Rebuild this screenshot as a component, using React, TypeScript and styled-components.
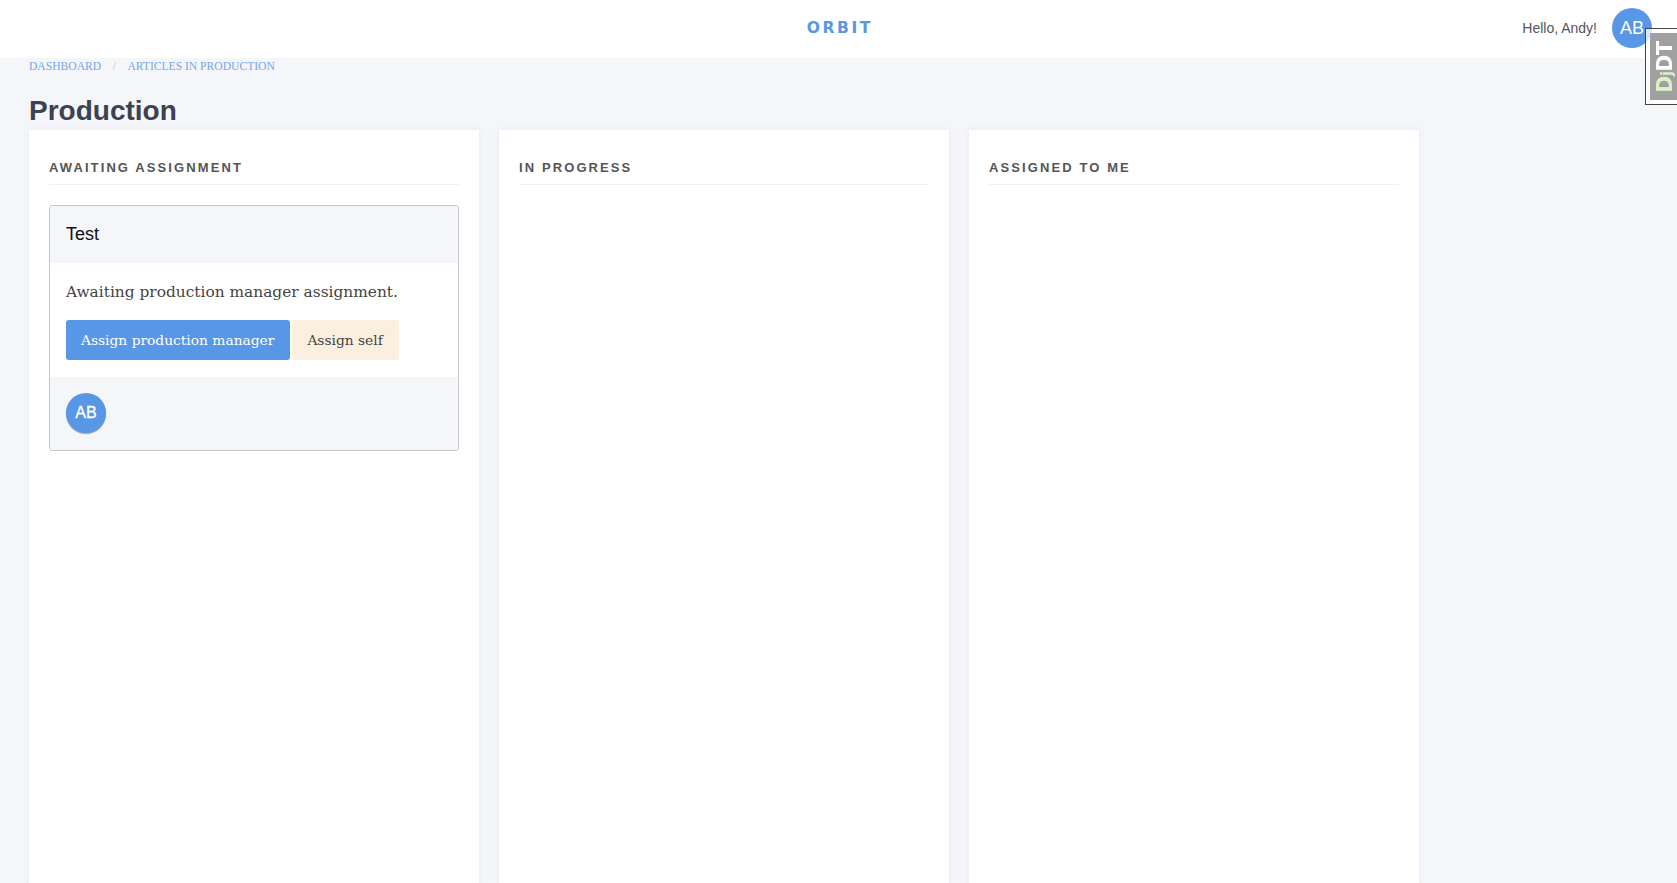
import React from "react";
import styled, { createGlobalStyle } from "styled-components";

const Global = createGlobalStyle`
  html, body { margin: 0; padding: 0; height: 100%; overflow: hidden; background: #f5f6fa; }
  body { font-family: "Liberation Sans", Arial, sans-serif; }
  * { box-sizing: border-box; }
`;

const serif = `"DejaVu Serif", "Liberation Serif", serif`;
const blue = "#5897e6";
const panel = "#f5f6fa";

const Page = styled.div`
  height: 883px;
  overflow: hidden;
  display: flex;
  flex-direction: column;
`;
const Header = styled.header`
  flex: none;
  height: 58px;
  background: #fff;
  display: grid;
  grid-template-columns: 1fr auto 1fr;
  align-items: center;
  padding: 0 25px 2px;
`;
const Logo = styled.div`
  grid-column: 2;
  font-family: "DejaVu Sans", sans-serif;
  font-size: 15.5px;
  font-weight: 700;
  letter-spacing: 2.6px;
  margin-right: -2.6px;
  color: ${blue};
`;
const UserArea = styled.div`
  grid-column: 3;
  display: flex;
  justify-content: flex-end;
  align-items: center;
  gap: 15px;
`;
const Hello = styled.span`
  font-size: 14px;
  color: #555;
`;
const Avatar = styled.div<{ $small?: boolean }>`
  width: 40px;
  height: 40px;
  border-radius: 50%;
  background: ${blue};
  color: #fff;
  display: flex;
  align-items: center;
  justify-content: center;
  font-size: ${(p) => (p.$small ? "16px" : "18px")};
  -webkit-text-stroke: ${(p) => (p.$small ? "0.3px #fff" : "0")};
  box-shadow: ${(p) => (p.$small ? "0 1px 1px rgba(0,0,0,.35)" : "none")};
`;
const Main = styled.main`
  flex: 1;
  min-height: 0;
  padding: 0 29px;
  display: flex;
  flex-direction: column;
`;
const Crumbs = styled.nav`
  height: 14px;
  margin-top: 1px;
  display: flex;
  align-items: center;
  font-family: "Liberation Serif", serif;
  font-size: 11.6px;
  color: #74a7ee;
  white-space: nowrap;
`;
const CrumbSep = styled.span`
  color: #bbb;
  margin: 0 11.5px;
`;
const Title = styled.h1`
  margin: 21px 0 0;
  height: 36px;
  font-size: 28px;
  line-height: 34px;
  font-weight: 700;
  color: #3c4252;
`;
const Columns = styled.div`
  flex: 1;
  min-height: 0;
  display: flex;
  gap: 20px;
`;
const Column = styled.section`
  width: 450px;
  background: #fff;
  padding: 20px;
  box-shadow: 0 0 6px rgba(60, 70, 110, 0.07);
`;
const ColumnTitle = styled.h2`
  margin: 0;
  height: 35px;
  padding-top: 10px;
  border-bottom: 1px solid #f1f1f3;
  font-size: 13px;
  line-height: 16px;
  font-weight: 700;
  letter-spacing: 2.1px;
  color: #555;
`;
const Card = styled.article`
  margin-top: 20px;
  border: 1px solid #c8c8cc;
  border-radius: 3px;
  overflow: hidden;
`;
const CardHead = styled.div`
  height: 57px;
  padding: 0 16px;
  display: flex;
  align-items: center;
  background: ${panel};
  font-size: 18px;
  color: #111;
`;
const CardBody = styled.div`
  background: #fff;
  height: 114px;
  padding: 16px 16px 0;
`;
const CardText = styled.p`
  margin: 0 0 15px;
  height: 26px;
  font-family: ${serif};
  font-size: 15.4px;
  line-height: 26px;
  color: #444;
  white-space: nowrap;
`;
const Buttons = styled.div`
  display: flex;
  gap: 2px;
`;
const Button = styled.button<{ $primary?: boolean }>`
  height: 40px;
  padding: 0 16px 0 15px;
  border: 0;
  border-radius: 3px;
  font-family: ${serif};
  font-size: 13.8px;
  background: ${(p) => (p.$primary ? blue : "#fbf0df")};
  color: ${(p) => (p.$primary ? "#fff" : "#444")};
  white-space: nowrap;
`;
const CardFoot = styled.div`
  height: 73px;
  padding: 16px;
  background: ${panel};
`;
const DebugTab = styled.div`
  position: fixed;
  top: 28px;
  right: 0;
  width: 32px;
  height: 77px;
  border: 1px solid #444;
  border-right: 0;
  padding: 4px 0 4px 4px;
  background: rgba(255, 255, 255, 0.75);
`;
const DebugInner = styled.div`
  width: 100%;
  height: 100%;
  background: #a0a0a0;
  display: flex;
  align-items: center;
  justify-content: center;
`;
const DebugText = styled.span`
  display: block;
  transform: translateX(2px) rotate(-90deg) scaleX(0.94);
  font-family: "DejaVu Sans", sans-serif;
  font-size: 22px;
  font-weight: 700;
  line-height: 1;
  letter-spacing: -0.5px;
  color: #fff;
  white-space: nowrap;
`;
const DebugDj = styled.span`
  color: #dcf3c8;
`;
const DebugJ = styled.span`
  font-size: 15px;
`;

const columns = ["AWAITING ASSIGNMENT", "IN PROGRESS", "ASSIGNED TO ME"];

export default function App() {
  return (
    <Page>
      <Global />
      <Header>
        <Logo>ORBIT</Logo>
        <UserArea>
          <Hello>Hello, Andy!</Hello>
          <Avatar>AB</Avatar>
        </UserArea>
      </Header>
      <Main>
        <Crumbs>
          <span>DASHBOARD</span>
          <CrumbSep>/</CrumbSep>
          <span>ARTICLES IN PRODUCTION</span>
        </Crumbs>
        <Title>Production</Title>
        <Columns>
          {columns.map((name, i) => (
            <Column key={name}>
              <ColumnTitle>{name}</ColumnTitle>
              {i === 0 && (
                <Card>
                  <CardHead>Test</CardHead>
                  <CardBody>
                    <CardText>Awaiting production manager assignment.</CardText>
                    <Buttons>
                      <Button $primary>Assign production manager</Button>
                      <Button>Assign self</Button>
                    </Buttons>
                  </CardBody>
                  <CardFoot>
                    <Avatar $small>AB</Avatar>
                  </CardFoot>
                </Card>
              )}
            </Column>
          ))}
        </Columns>
      </Main>
      <DebugTab>
        <DebugInner>
          <DebugText>
            <DebugDj>
              D<DebugJ>j</DebugJ>
            </DebugDj>
            DT
          </DebugText>
        </DebugInner>
      </DebugTab>
    </Page>
  );
}
